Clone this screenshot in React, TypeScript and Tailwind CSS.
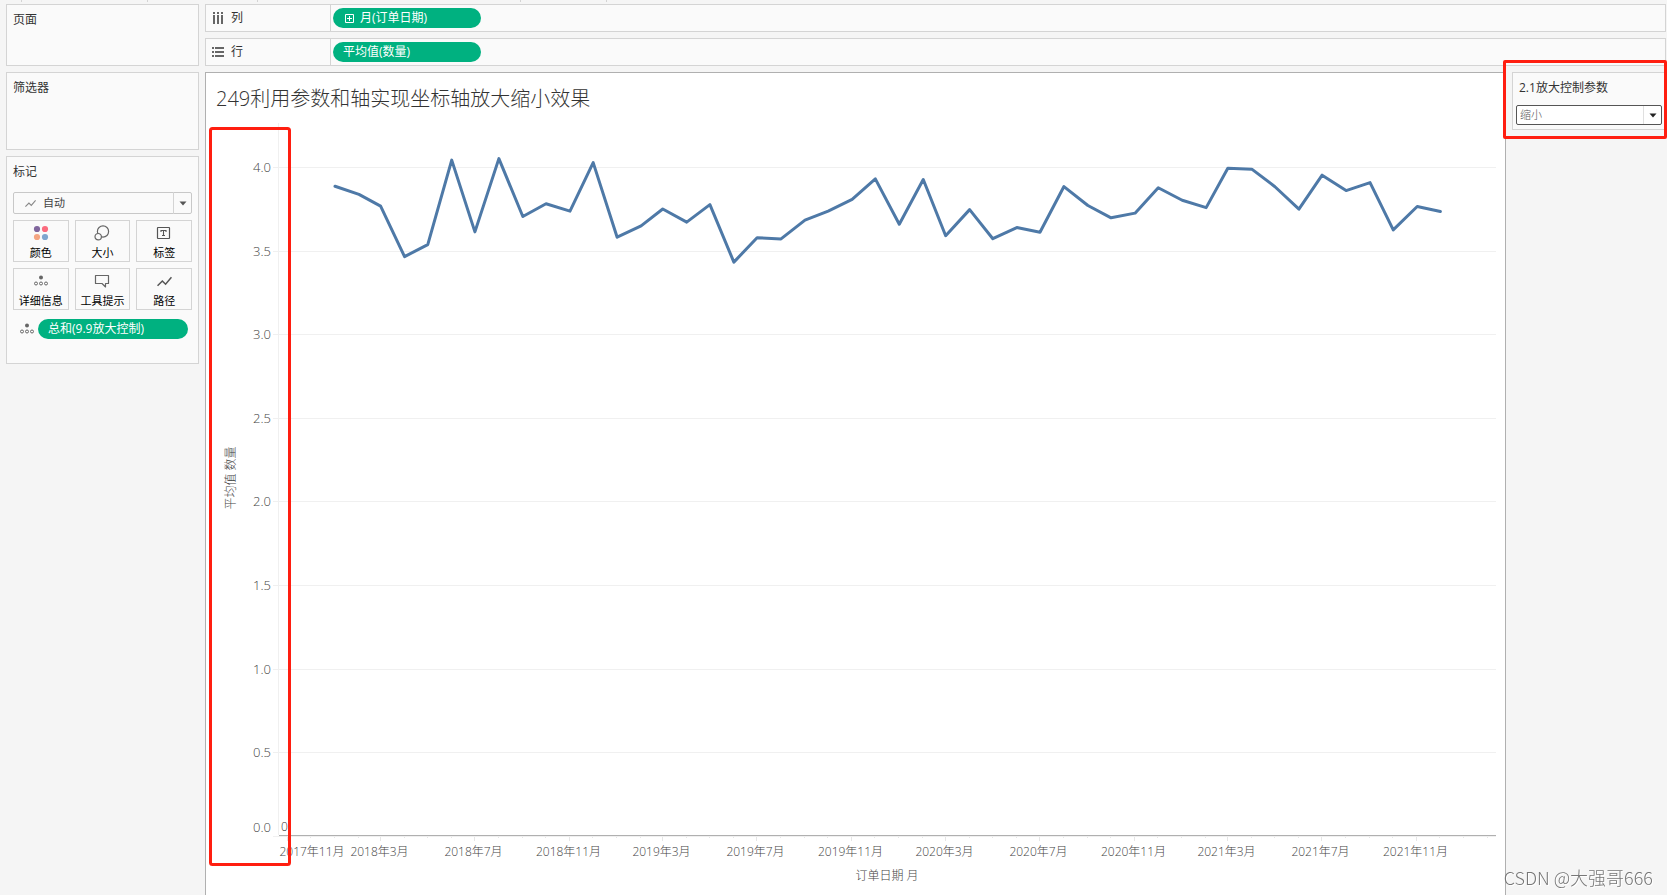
import type { ReactNode } from 'react'

const DAY_PX = 0.773
const START_X = 129
const ZERO_Y = 713.3
const UNIT_PX = 167.2
const AXIS_X = 72.5
const AXIS_END = 1290

// monthly averages, 2018-01 to 2021-12
const averages = [
  3.888, 3.839, 3.769, 3.467, 3.539, 4.044, 3.615, 4.053, 3.707, 3.783, 3.739, 4.029,
  3.583, 3.651, 3.752, 3.673, 3.778, 3.434, 3.58, 3.573, 3.685, 3.739, 3.809, 3.932,
  3.661, 3.928, 3.592, 3.748, 3.574, 3.641, 3.613, 3.886, 3.773, 3.699, 3.727, 3.879,
  3.804, 3.76, 3.996, 3.99, 3.885, 3.751, 3.954, 3.862, 3.91, 3.627, 3.767, 3.737,
]

const monthX = (i: number) =>
  START_X + ((Date.UTC(2018, i, 1) - Date.UTC(2018, 0, 1)) / 86400000) * DAY_PX
const valueY = (v: number) => ZERO_Y - v * UNIT_PX

const yTicks = [4, 3.5, 3, 2.5, 2, 1.5, 1, 0.5, 0]
const xTicks = Array.from({ length: 52 }, (_, n) => n - 2)

function monthLabel(i: number) {
  const d = new Date(Date.UTC(2018, i, 1))
  return `${d.getUTCFullYear()}年${d.getUTCMonth() + 1}月`
}

function Chart() {
  const points = averages.map((v, i) => `${monthX(i)},${valueY(v)}`).join(' ')
  return (
    <svg viewBox="0 0 1299 772" className="block w-full font-light" role="img" aria-label="平均值 数量">
      <line x1={AXIS_X} x2={AXIS_X} y1="0" y2="712" stroke="#f0f0f0" />
      {yTicks.map(v => {
        const y = Math.round(valueY(v) - 0.5) + 0.5
        return (
          <g key={v}>
            <line x1="67" x2={AXIS_END} y1={y} y2={y} stroke="#f0f0f0" />
            <text x="65" y={v === 0 ? 709 : y + 4.5} textAnchor="end" fontSize="13" fill="#444">
              {v.toFixed(1)}
            </text>
          </g>
        )
      })}
      <line x1="73" x2={AXIS_END} y1="712.5" y2="712.5" stroke="#b0b0b0" />

      {xTicks.map(i => {
        const major = (((i - 2) % 4) + 4) % 4 === 0
        const x = Math.round(monthX(i)) - 0.5
        return (
          <g key={i}>
            <line x1={x} x2={x} y1="714" y2={major ? 718 : 715} stroke="#e6e6e6" />
            {major && i < 50 && (
              <text x={Math.max(x - 1, 106)} y="733" textAnchor="middle" fontSize="12" fill="#444">
                {monthLabel(i)}
              </text>
            )}
          </g>
        )
      })}

      <polyline points={points} fill="none" stroke="#4e79a7" strokeWidth="3" strokeLinejoin="round" strokeLinecap="round" />
      <text x="75" y="708" fontSize="12" fill="#333">0</text>
      <text x="681" y="757" textAnchor="middle" fontSize="12" fill="#444">订单日期 月</text>
      <text transform="translate(29 355) rotate(-90)" textAnchor="middle" fontSize="12" fill="#444">平均值 数量</text>
      <rect x="4.5" y="5.5" width="79" height="736" rx="2" fill="none" stroke="#ff1e10" strokeWidth="3" />
    </svg>
  )
}

function DetailIcon() {
  return (
    <svg width="14" height="12" viewBox="0 0 14 12" fill="none" stroke="#666">
      <circle cx="7" cy="2.5" r="2" fill="#666" stroke="none" />
      <circle cx="2" cy="8.5" r="1.5" />
      <circle cx="7" cy="8.5" r="1.5" />
      <circle cx="12" cy="8.5" r="1.5" />
    </svg>
  )
}

function LineIcon({ size, color }: { size: number; color: string }) {
  return (
    <svg width={size} height={size} viewBox="0 0 14 14" fill="none" stroke={color} strokeWidth="1.4">
      <path d="M0.5 11 L5 6.5 L8 9.5 L13.5 3" />
    </svg>
  )
}

function Caret({ className }: { className: string }) {
  return (
    <span className={`pointer-events-none absolute inset-y-0 right-0 flex items-center justify-center border-l ${className}`}>
      <svg width="8" height="5" viewBox="0 0 8 5"><path d="M0.5 0.5 H7.5 L4 4.5 Z" fill="currentColor" /></svg>
    </span>
  )
}

const markButtons: { label: string; icon: ReactNode }[] = [
  {
    label: '颜色',
    icon: (
      <svg width="16" height="16" viewBox="0 0 16 16">
        <circle cx="4" cy="4" r="3.1" fill="#80669d" />
        <circle cx="12" cy="4" r="3.1" fill="#fb6b7e" />
        <circle cx="4" cy="12" r="3.1" fill="#f4a582" />
        <circle cx="12" cy="12" r="3.1" fill="#7fa6cf" />
      </svg>
    ),
  },
  {
    label: '大小',
    icon: (
      <svg width="16" height="16" viewBox="0 0 16 16" fill="none" stroke="#666" strokeWidth="1.2">
        <circle cx="9" cy="6.5" r="5.6" />
        <circle cx="4.2" cy="11.7" r="3.2" fill="#fafafa" />
      </svg>
    ),
  },
  {
    label: '标签',
    icon: (
      <svg width="16" height="16" viewBox="0 0 16 16" fill="none" stroke="#555">
        <rect x="1.5" y="2.5" width="12" height="11" rx="0.5" strokeWidth="1.2" />
        <path d="M5 7 V5.5 H10 V7 M7.5 5.5 V10.5 M6 10.5 H9" strokeWidth="1.1" />
      </svg>
    ),
  },
  { label: '详细信息', icon: <DetailIcon /> },
  {
    label: '工具提示',
    icon: (
      <svg width="16" height="16" viewBox="0 0 16 16" fill="none" stroke="#666" strokeWidth="1.2">
        <path d="M1.5 2.5 H14.5 V10.5 H11.5 V14 L8 10.5 H1.5 Z" strokeLinejoin="round" />
      </svg>
    ),
  },
  { label: '路径', icon: <LineIcon size={15} color="#555" /> },
]

function Shelf({ icon, label, children }: { icon: ReactNode; label: string; children: ReactNode }) {
  return (
    <section className="mr-px flex h-7 border border-[#d4d4d4] bg-[#fafafa]">
      <h2 className="flex w-[125px] items-center gap-[7px] border-r border-[#d4d4d4] pl-1.5 text-xs">
        {icon}
        {label}
      </h2>
      <div className="flex items-center pl-0.5">{children}</div>
    </section>
  )
}

const pill = 'flex h-5 items-center rounded-full bg-[#00b180] text-left text-xs text-white'

export default function App() {
  return (
    <div className="flex min-h-screen flex-col bg-[#f5f5f5] font-['Open_Sans','Noto_Sans_CJK_SC',sans-serif] text-[#333]">
      {/* Bottom edge of the toolbar */}
      <div className="flex h-1 shrink-0">
        <i className="h-0.5 w-[22px] border-r border-[#d4d4d4]" />
        <i className="h-0.5 w-[126px] border-r border-[#d4d4d4]" />
        <i className="h-0.5 w-[110px] border-r border-[#d4d4d4]" />
        <i className="h-0.5 w-[263px] border-r border-[#d4d4d4]" />
        <i className="h-0.5 w-[86px] border-r border-[#d4d4d4]" />
      </div>

      <div className="flex flex-1 gap-1.5 pl-1.5">
        {/* Pages, filters, marks */}
        <aside className="flex w-[193px] shrink-0 flex-col gap-1.5">
          <section className="h-[62px] border border-[#d4d4d4] bg-[#fafafa] px-1.5 pt-1.5">
            <h2 className="text-xs leading-[18px]">页面</h2>
          </section>
          <section className="h-[78px] border border-[#d4d4d4] bg-[#fafafa] px-1.5 pt-1.5">
            <h2 className="text-xs leading-[18px]">筛选器</h2>
          </section>
          <section className="border border-[#d4d4d4] bg-[#fafafa] px-1.5 pt-1.5 pb-6">
            <h2 className="text-xs leading-[18px]">标记</h2>
            <div className="relative mt-[11px] h-[22px] text-[#444]">
              <span className="pointer-events-none absolute inset-y-0 left-3 flex items-center">
                <LineIcon size={11} color="#888" />
              </span>
              <select aria-label="标记类型" className="block size-full appearance-none rounded-xs border border-[#c8c8c8] bg-[#fafafa] pl-[29px] text-[11px]">
                <option>自动</option>
              </select>
              <Caret className="w-[19px] border-[#d4d4d4] text-[#555]" />
            </div>
            <div className="mt-1.5 grid grid-cols-3 gap-1.5">
              {markButtons.map(b => (
                <button key={b.label} type="button" className="flex h-[42px] flex-col items-center justify-between border border-[#d4d4d4] pt-1 text-[11px] leading-4 whitespace-nowrap text-black">
                  <span className="flex h-4 items-center">{b.icon}</span>
                  {b.label}
                </button>
              ))}
            </div>
            <div className="mt-[9px] flex items-center gap-1 pl-[7px]">
              <DetailIcon />
              <button type="button" className={`${pill} w-[150px] pl-2.5`}>总和(9.9放大控制)</button>
            </div>
          </section>
        </aside>

        <div className="flex min-w-0 flex-1 flex-col gap-1.5">
          <Shelf
            label="列"
            icon={
              <svg width="12" height="12" viewBox="0 0 12 12" fill="#666">
                <path d="M1 0h2v2H1zM5 0h2v2H5zM9 0h2v2H9zM1 3h2v9H1zM5 3h2v9H5zM9 3h2v9H9z" />
              </svg>
            }
          >
            <button type="button" className={`${pill} w-[148px] gap-1.5 pl-3`}>
              <svg width="9" height="9" viewBox="0 0 9 9" fill="none" stroke="#fff">
                <path d="M0.5 0.5h8v8h-8zM2 4.5h5M4.5 2v5" />
              </svg>
              月(订单日期)
            </button>
          </Shelf>
          <Shelf
            label="行"
            icon={
              <svg width="12" height="12" viewBox="0 0 12 12" fill="#666">
                <path d="M0 1h2v2H0zM0 5h2v2H0zM0 9h2v2H0zM3 1h9v2H3zM3 5h9v2H3zM3 9h9v2H3z" />
              </svg>
            }
          >
            <button type="button" className={`${pill} w-[148px] pl-2.5`}>平均值(数量)</button>
          </Shelf>

          <div className="flex flex-1 gap-1.5">
            <main className="min-w-0 flex-1 border border-b-0 border-[#b0b0b0] bg-white">
              <h1 className="flex h-[50px] items-center pt-0.5 pl-2.5 text-xl font-light">
                249利用参数和轴实现坐标轴放大缩小效果
              </h1>
              <Chart />
            </main>

            {/* Parameter control */}
            <aside className="w-[155px] shrink-0 pr-px">
              <div className="relative h-[58px] border border-[#d4d4d4] bg-[#fafafa] px-[3px] pt-1.5">
                <label htmlFor="zoom-param" className="block pl-[3px] text-xs leading-[18px]">2.1放大控制参数</label>
                <div className="relative mt-2 h-5">
                  <select id="zoom-param" className="block size-full appearance-none rounded-xs border border-[#555] bg-white pl-[3px] text-[11px] font-light text-[#555]">
                    <option>缩小</option>
                    <option>放大</option>
                  </select>
                  <Caret className="my-px w-[19px] border-[#e0e0e0] text-[#222]" />
                </div>
                <div className="pointer-events-none absolute -top-[13px] -right-0.5 -bottom-2.5 -left-2.5 rounded-xs border-3 border-[#ff1e10]" />
              </div>
            </aside>
          </div>
        </div>
      </div>

      <p className="fixed right-3.5 bottom-1 font-['Noto_Sans_CJK_SC',sans-serif] text-lg leading-7 font-light text-[#777] [text-shadow:1px_1px_0_#fff]">
        CSDN @大强哥666
      </p>
    </div>
  )
}
